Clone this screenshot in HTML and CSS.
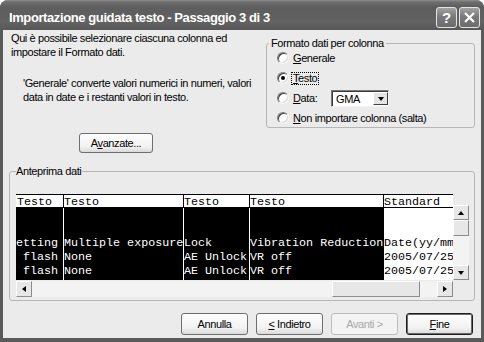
FILE: index.html
```html
<!DOCTYPE html>
<html lang="it">
<head>
<meta charset="UTF-8" />
<title>Importazione guidata testo</title>
<link rel="stylesheet" href="styles.css">
</head>
<body>

<div class="window">
  <div class="titlebar">
    <span class="title">Importazione guidata testo - Passaggio 3 di 3</span>
    <div class="cap-buttons">
      <span class="cap-btn">?</span>
      <span class="cap-btn">
        <svg width="19" height="19" viewBox="0 0 19 19"><path d="M5 5 L14 14 M14 5 L5 14" stroke="#fff" stroke-width="2.2" fill="none"/></svg>
      </span>
    </div>
  </div>

  <div class="client">
    <div class="top">
      <div class="intro">
        <p class="lead">Qui è possibile selezionare ciascuna colonna ed<br>impostare il Formato dati.</p>
        <p class="note">'Generale' converte valori numerici in numeri, valori<br>data in date e i restanti valori in testo.</p>
        <button class="btn advanced">A<u>v</u>anzate...</button>
      </div>

      <fieldset class="group format">
        <legend>Formato dati per colonna</legend>
        <div class="radios">
          <div class="radio"><span class="dot"></span><span><u>G</u>enerale</span></div>
          <div class="radio"><span class="dot checked"></span><span class="focus"><u>T</u>esto</span></div>
          <div class="radio">
            <span class="dot"></span><span class="data-label"><u>D</u>ata:</span>
            <div class="combo"><span>GMA</span><span class="combo-btn"></span></div>
          </div>
          <div class="radio"><span class="dot"></span><span><u>N</u>on importare colonna (salta)</span></div>
        </div>
      </fieldset>
    </div>

    <fieldset class="group preview">
      <legend>Anteprima dati</legend>
      <div class="pv">
        <div class="table">
          <div class="col sel c1">
            <div class="hd">Testo</div>
            <div class="cells"><div></div><div></div><div>etting</div><div> flash</div><div> flash</div></div>
          </div>
          <div class="col sel c2">
            <div class="hd">Testo</div>
            <div class="cells"><div></div><div></div><div>Multiple exposure</div><div>None</div><div>None</div></div>
          </div>
          <div class="col sel c3">
            <div class="hd">Testo</div>
            <div class="cells"><div></div><div></div><div>Lock</div><div>AE Unlock</div><div>AE Unlock</div></div>
          </div>
          <div class="col sel c4">
            <div class="hd">Testo</div>
            <div class="cells"><div></div><div></div><div>Vibration Reduction</div><div>VR off</div><div>VR off</div></div>
          </div>
          <div class="col std c5">
            <div class="hd">Standard</div>
            <div class="cells"><div></div><div></div><div>Date(yy/mm</div><div>2005/07/25</div><div>2005/07/25</div></div>
          </div>
        </div>

        <div class="vscroll">
          <span class="sb-btn up"></span>
          <div class="vtrack"><span class="thumb vthumb"></span></div>
          <span class="sb-btn down"></span>
        </div>

        <div class="hscroll">
          <span class="sb-btn left"></span>
          <div class="htrack"><span class="thumb hthumb"></span></div>
          <span class="sb-btn right"></span>
        </div>
      </div>
    </fieldset>

    <div class="actions">
      <button class="btn">Annulla</button>
      <button class="btn"><u>&lt;</u> Indietro</button>
      <button class="btn disabled">Avanti &gt;</button>
      <button class="btn default"><u>F</u>ine</button>
    </div>
  </div>
</div>

</body>
</html>
```

FILE: styles.css
```css
body {
  margin: 0;
  background: #fff;
  font-family: "Liberation Sans", Arial, sans-serif;
  font-size: 11px;
  letter-spacing: -0.4px;
  color: #000;
}

/* cornice della finestra */
.window {
  width: 484px;
  height: 342px;
  background: #5a5a5a;
  border-radius: 8px 8px 0 0;
  display: flex;
  flex-direction: column;
}

.titlebar {
  height: 30px;
  flex: none;
  display: flex;
  align-items: flex-start;
  padding: 0 4px 0 9px;
  border-radius: 8px 8px 0 0;
  background: linear-gradient(to bottom, #8e8e8e 0, #6e6e6e 2px, #5d5d5d 7px, #626262 22px, #575757 30px);
}

.title {
  flex: 1;
  margin-top: 10px;
  line-height: 15px;
  color: #fff;
  font-weight: bold;
  font-size: 13px;
  letter-spacing: -0.4px;
}

.cap-buttons {
  display: flex;
  gap: 2px;
  margin-top: 7px;
}

.cap-btn {
  width: 21px;
  height: 21px;
  box-sizing: border-box;
  border: 1px solid #e4e4e4;
  border-radius: 3px;
  background: linear-gradient(to bottom, #a2a2a2, #7a7a7a 45%, #6c6c6c);
  color: #fff;
  font-weight: bold;
  font-size: 15px;
  letter-spacing: 0;
  display: flex;
  align-items: center;
  justify-content: center;
}

.client {
  flex: 1;
  margin: 0 3px 4px;
  background: #ebebeb;
  display: flex;
  flex-direction: column;
}

.top {
  display: flex;
  height: 134px;
  flex: none;
}

.intro {
  width: 255px;
  padding-left: 8px;
}

.lead {
  margin: 1px 0 0;
  line-height: 14px;
}

.note {
  margin: 17px 0 0 12px;
  line-height: 14px;
}

/* pulsanti */
.btn {
  width: 67px;
  height: 22px;
  box-sizing: border-box;
  padding: 0;
  border: 1px solid #6e6e6e;
  border-radius: 3px;
  background: linear-gradient(to bottom, #fefefe, #f2f2f2 70%, #dadada);
  font: inherit;
  letter-spacing: inherit;
  color: #000;
}

.btn.advanced {
  display: block;
  width: 74px;
  height: 20px;
  margin: 29px 0 0 68px;
}

.btn.disabled {
  color: #a9a9a9;
  border-color: #bdbdbd;
  background: #f3f3f3;
}

.btn.default {
  border-color: #1e1e1e;
  box-shadow: inset 0 0 0 1px #6a6a6a;
}

/* riquadri */
.group {
  box-sizing: border-box;
  margin: 0;
  padding: 0;
  min-width: 0;
  border: 1px solid #b6b6b6;
  border-radius: 3px;
}

.group legend {
  line-height: 14px;
  padding: 0 2px;
  margin-left: 2px;
}

.format {
  margin-top: 6px;
  width: 209px;
  height: 92px;
}

.radios {
  margin-top: -2px;
  padding-left: 10px;
}

.radio {
  display: flex;
  align-items: center;
  height: 20px;
}

.dot {
  width: 12px;
  height: 12px;
  box-sizing: border-box;
  margin-right: 4px;
  border-radius: 50%;
  border: 1px solid;
  border-color: #7e7e7e #f4f4f4 #f4f4f4 #7e7e7e;
  background: #fff;
  box-shadow: inset 1px 1px 0 #3c3c3c, inset -1px -1px 0 #d6d6d6;
  position: relative;
}

.dot.checked::after {
  content: "";
  position: absolute;
  left: 3px;
  top: 3px;
  width: 4px;
  height: 4px;
  border-radius: 50%;
  background: #000;
}

.focus {
  border: 1px dotted #000;
  padding: 0 1px;
  margin-left: -2px;
  line-height: 11px;
}

.data-label {
  display: inline-block;
  width: 38px;
}

.combo {
  width: 58px;
  height: 17px;
  box-sizing: border-box;
  margin-top: 1px;
  padding-left: 4px;
  border: 1px solid;
  border-color: #7a7a7a #f2f2f2 #f2f2f2 #7a7a7a;
  box-shadow: inset 1px 1px 0 #3a3a3a;
  background: #fff;
  display: flex;
  align-items: center;
  justify-content: space-between;
}

.combo-btn {
  width: 15px;
  height: 13px;
  box-sizing: border-box;
  border: 1px solid;
  border-color: #fff #404040 #404040 #fff;
  background: #e4e4e4;
  display: flex;
  align-items: center;
  justify-content: center;
}

.combo-btn::before,
.sb-btn::before {
  content: "";
  border-left: 3.5px solid transparent;
  border-right: 3.5px solid transparent;
  border-top: 4px solid #000;
}

/* anteprima */
.preview {
  margin-left: 6px;
  width: 466px;
  height: 137px;
  padding: 16px 0 0 6px;
}

.preview legend {
  margin-left: 0;
  padding: 0 1px 0 0;
}

.pv {
  display: grid;
  grid-template-columns: 437px 16px;
  grid-template-rows: 86px 16px;
  row-gap: 1px;
}

.table {
  display: flex;
  overflow: hidden;
  background: #fff;
  font-family: "Liberation Mono", "Courier New", monospace;
  font-size: 11.7px;
  letter-spacing: 0;
}

.col {
  flex: none;
  display: flex;
  flex-direction: column;
  white-space: pre;
  overflow: hidden;
}

.c1 { width: 47px; }
.c2 { width: 120px; }
.c3 { width: 66px; }
.c4 { width: 134px; }
.c5 { width: 70px; }

.hd {
  height: 14px;
  box-sizing: border-box;
  padding-top: 2px;
  line-height: 10px;
  border-top: 1px solid #000;
  border-bottom: 1px solid #000;
  background: #fff;
  color: #000;
}

.c1 .hd { padding-left: 1px; }

.col + .col .hd {
  border-left: 1px solid #000;
}

.cells {
  flex: 1;
  background: #000;
  color: #fff;
  line-height: 14px;
}

.cells div {
  height: 14px;
}

.col.sel + .col.sel .cells {
  border-left: 1px solid #fff;
}

.col.std .cells {
  background: #fff;
  color: #000;
  border-left: 1px solid #000;
}

/* barre di scorrimento */
.vscroll {
  margin-top: 11px;
  height: 75px;
  display: flex;
  flex-direction: column;
  background: #f3f3f3;
}

.hscroll {
  display: flex;
  background: #f3f3f3;
}

.sb-btn,
.thumb {
  box-sizing: border-box;
  border: 1px solid;
  border-color: #fff #8c8c8c #8c8c8c #fff;
  background: #e7e7e7;
  display: flex;
  align-items: center;
  justify-content: center;
  flex: none;
}

.vscroll .sb-btn {
  height: 15px;
}

.hscroll .sb-btn {
  width: 16px;
}

.sb-btn.up::before {
  border-top: 0;
  border-bottom: 4px solid #000;
}

.sb-btn.left::before {
  border: 0;
  border-top: 3.5px solid transparent;
  border-bottom: 3.5px solid transparent;
  border-right: 4px solid #000;
}

.sb-btn.right::before {
  border: 0;
  border-top: 3.5px solid transparent;
  border-bottom: 3.5px solid transparent;
  border-left: 4px solid #000;
}

.vtrack {
  flex: 1;
  display: flex;
  flex-direction: column;
}

.vthumb {
  height: 16px;
}

.htrack {
  flex: 1;
  display: flex;
}

.hthumb {
  width: 88px;
  margin-left: 300px;
}

.actions {
  display: flex;
  justify-content: flex-end;
  gap: 8px;
  margin-top: 12px;
  padding-right: 8px;
}
```
